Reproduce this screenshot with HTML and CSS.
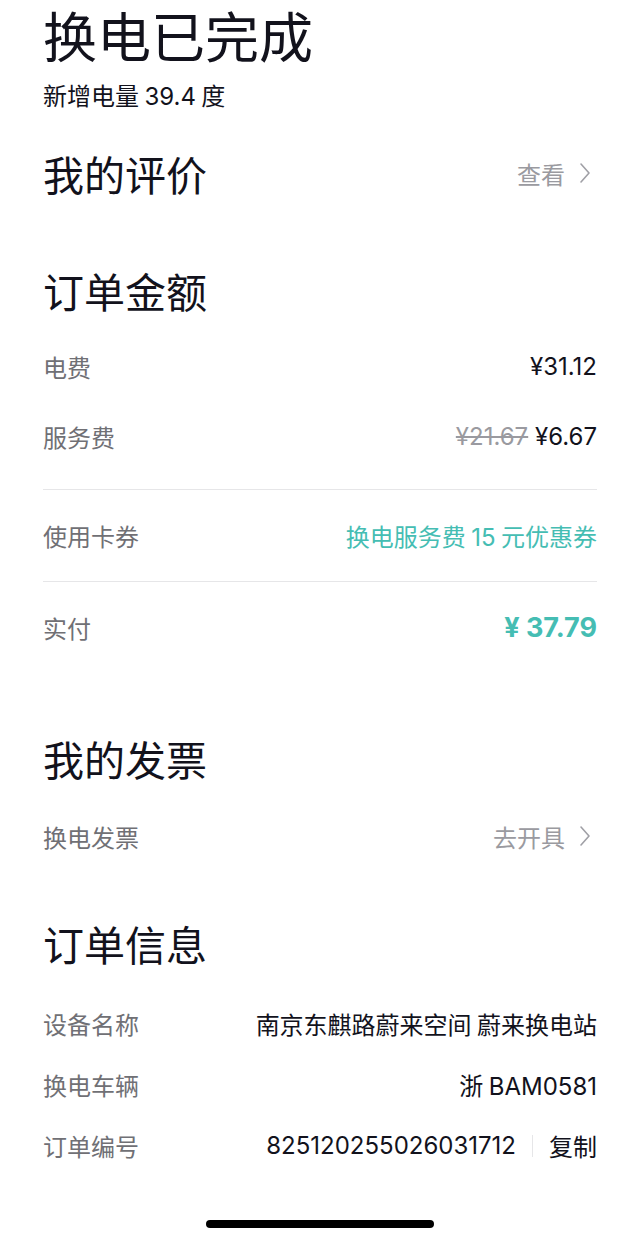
FILE: index.html
```html
<!DOCTYPE html>
<html lang="zh-CN">

<head>
  <meta charset="UTF-8">
  <meta name="viewport" content="width=device-width, initial-scale=1.0">
  <title>换电订单</title>
  <link rel="stylesheet" href="styles.css">
</head>

<body>
  <main class="page">
    <header class="status">
      <h1 class="title">换电已完成</h1>
      <p class="subtitle">新增电量 <span class="num">39.4</span> 度</p>
    </header>

    <section class="block review">
      <div class="block-head">
        <h2>我的评价</h2>
        <a class="more" href="#">查看
          <svg class="chevron" viewBox="0 0 12 22" width="12" height="22">
            <polyline points="2,2 10,11 2,20" />
          </svg>
        </a>
      </div>
    </section>

    <section class="block amount">
      <h2>订单金额</h2>
      <div class="fees">
        <div class="row">
          <span class="label">电费</span>
          <span class="value num">¥31.12</span>
        </div>
        <div class="row">
          <span class="label">服务费</span>
          <span class="value num"><s class="old">¥21.67</s> ¥6.67</span>
        </div>
      </div>
      <div class="row tall divided">
        <span class="label">使用卡券</span>
        <span class="value coupon">换电服务费 <span class="num">15</span> 元优惠券</span>
      </div>
      <div class="row tall">
        <span class="label">实付</span>
        <span class="value total num">¥ 37.79</span>
      </div>
    </section>

    <section class="block invoice">
      <h2>我的发票</h2>
      <div class="row">
        <span class="label">换电发票</span>
        <a class="more" href="#">去开具
          <svg class="chevron" viewBox="0 0 12 22" width="12" height="22">
            <polyline points="2,2 10,11 2,20" />
          </svg>
        </a>
      </div>
    </section>

    <section class="block info">
      <h2>订单信息</h2>
      <div class="row short">
        <span class="label">设备名称</span>
        <span class="value">南京东麒路蔚来空间 蔚来换电站</span>
      </div>
      <div class="row short">
        <span class="label">换电车辆</span>
        <span class="value">浙 <span class="num">BAM0581</span></span>
      </div>
      <div class="row short">
        <span class="label">订单编号</span>
        <span class="value order-no">
          <span class="num">825120255026031712</span>
          <span class="sep"></span>
          <a class="copy" href="#">复制</a>
        </span>
      </div>
    </section>

    <div class="home-bar"></div>
  </main>
</body>

</html>
```

FILE: styles.css
```css
:root {
  --text-dark: #12121c;
  --text-label: #707075;
  --text-muted: #9a9aa0;
  --teal: #45bdb3;
  --line-color: #e6e6e8;
}

body {
  margin: 0;
  background-color: #ffffff;
  color: var(--text-dark);
  font-family: "Noto Sans CJK SC", sans-serif;
}

.page {
  padding: 0 43px;
}

.num {
  font-family: Inter, "Noto Sans CJK SC", sans-serif;
}

.title {
  margin: 0;
  font-size: 54px;
  font-weight: 400;
  line-height: 70px;
}

.subtitle {
  margin: 10px 0 0;
  font-size: 24px;
  line-height: 30px;
}

h2 {
  margin: 0;
  font-size: 41px;
  font-weight: 400;
  line-height: 56px;
}

.review {
  margin-top: 33px;
}

.block-head {
  display: flex;
  align-items: center;
  justify-content: space-between;
}

.more {
  display: flex;
  align-items: center;
  gap: 14px;
  color: var(--text-muted);
  font-size: 24px;
  text-decoration: none;
  margin-right: 6px;
}

.chevron {
  fill: none;
  stroke: #a0a0a6;
  stroke-width: 1.6;
  stroke-linecap: round;
  stroke-linejoin: round;
}

.amount {
  margin-top: 61px;
}

.amount h2 {
  margin-bottom: 13px;
}

.row {
  display: flex;
  align-items: center;
  justify-content: space-between;
  height: 70px;
  font-size: 24px;
}

.row.tall {
  height: 91px;
}

.row.short {
  height: 61px;
}

.fees {
  padding-bottom: 18px;
  border-bottom: 1px solid var(--line-color);
}

.divided {
  border-bottom: 1px solid var(--line-color);
}

.label {
  color: var(--text-label);
}

.value {
  color: var(--text-dark);
}

.old {
  color: var(--text-muted);
}

.coupon {
  color: var(--teal);
}

.total {
  color: var(--teal);
  font-size: 27px;
  font-weight: 700;
}

.invoice {
  margin-top: 57px;
}

.invoice h2 {
  margin-bottom: 15px;
}

.info {
  margin-top: 44px;
}

.info h2 {
  margin-bottom: 22px;
}

.order-no {
  display: flex;
  align-items: center;
}

.sep {
  width: 1px;
  height: 22px;
  margin: 0 16px;
  background-color: var(--line-color);
}

.copy {
  color: var(--text-dark);
  text-decoration: none;
}

.home-bar {
  width: 228px;
  height: 8px;
  margin: 44px auto 0;
  border-radius: 4px;
  background-color: #000000;
}
```
